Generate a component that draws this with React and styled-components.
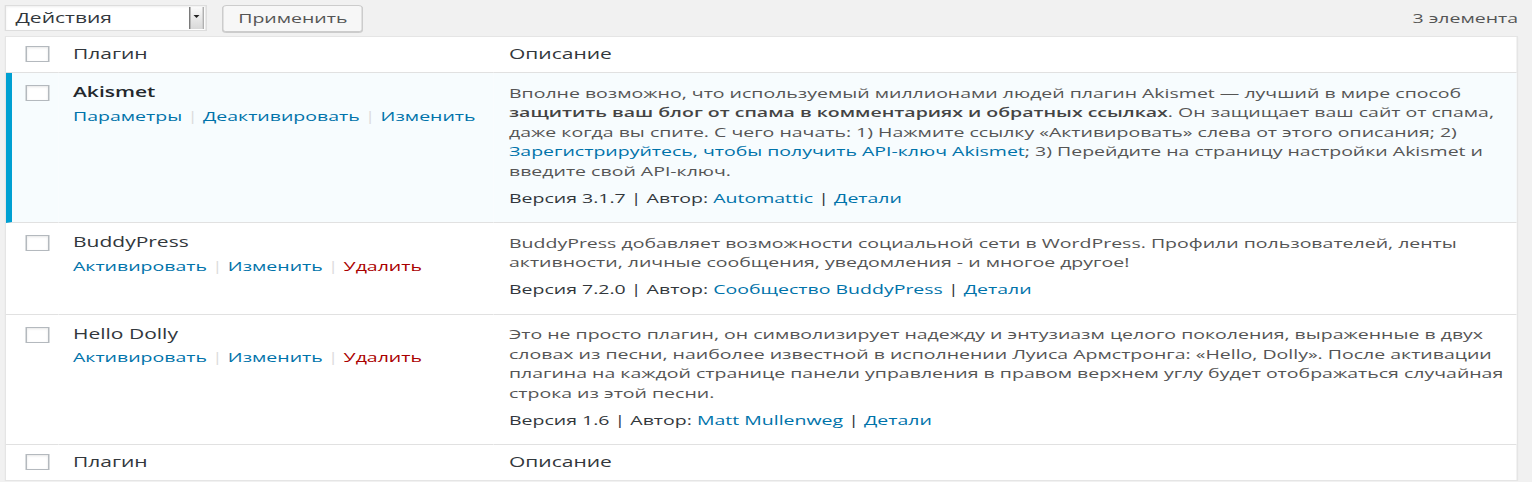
import React from "react";
import styled, { createGlobalStyle } from "styled-components";

// The reference is a WordPress plugin list captured at ~1021px and stretched
// 1.5x horizontally, so the page is laid out at its real width and stretched.
const STRETCH = 1.5;

const plugins = [
  {
    name: "Akismet",
    active: true,
    actions: [
      { label: "Параметры" },
      { label: "Деактивировать" },
      { label: "Изменить" },
    ],
    description: (
      <>
        Вполне возможно, что используемый миллионами людей плагин Akismet —
        лучший в мире способ{" "}
        <strong>защитить ваш блог от спама в комментариях и обратных ссылках</strong>.
        Он защищает ваш сайт от спама, даже когда вы спите. С чего начать: 1)
        Нажмите ссылку «Активировать» слева от этого описания; 2){" "}
        <a href="#">Зарегистрируйтесь, чтобы получить API-ключ Akismet</a>; 3)
        Перейдите на страницу настройки Akismet и введите свой API-ключ.
      </>
    ),
    version: "3.1.7",
    author: "Automattic",
  },
  {
    name: "BuddyPress",
    active: false,
    actions: [
      { label: "Активировать" },
      { label: "Изменить" },
      { label: "Удалить", danger: true },
    ],
    description: (
      <>
        BuddyPress добавляет возможности социальной сети в WordPress. Профили
        пользователей, ленты активности, личные сообщения, уведомления - и
        многое другое!
      </>
    ),
    version: "7.2.0",
    author: "Сообщество BuddyPress",
  },
  {
    name: "Hello Dolly",
    active: false,
    actions: [
      { label: "Активировать" },
      { label: "Изменить" },
      { label: "Удалить", danger: true },
    ],
    description: (
      <>
        Это не просто плагин, он символизирует надежду и энтузиазм целого
        поколения, выраженные в двух словах из песни, наиболее известной в
        исполнении Луиса Армстронга: «Hello, Dolly». После активации плагина на
        каждой странице панели управления в правом верхнем углу будет
        отображаться случайная строка из этой песни.
      </>
    ),
    version: "1.6",
    author: "Matt Mullenweg",
  },
];

const App = () => (
  <>
    <GlobalStyle />
    <Stretch>
      <TableNav>
        <Select>
          <SelectLabel>Действия</SelectLabel>
          <SelectArrow />
        </Select>
        <Button>Применить</Button>
        <Count>3 элемента</Count>
      </TableNav>

      <Table>
        <thead>
          <tr>
            <HeadCheck>
              <Checkbox />
            </HeadCheck>
            <HeadCell $width="290.67px">Плагин</HeadCell>
            <HeadCell>Описание</HeadCell>
          </tr>
        </thead>
        <tbody>
          {plugins.map((plugin) => (
            <tr key={plugin.name}>
              <RowCheck $active={plugin.active}>
                <Checkbox />
              </RowCheck>
              <TitleCell $active={plugin.active}>
                <Title $active={plugin.active}>{plugin.name}</Title>
                <RowActions>
                  {plugin.actions.map((action, i) => (
                    <React.Fragment key={action.label}>
                      {i > 0 && <Sep> | </Sep>}
                      <ActionLink href="#" $danger={action.danger}>
                        {action.label}
                      </ActionLink>
                    </React.Fragment>
                  ))}
                </RowActions>
              </TitleCell>
              <DescCell $active={plugin.active}>
                <Description>{plugin.description}</Description>
                <Meta>
                  Версия {plugin.version} | Автор:{" "}
                  <a href="#">{plugin.author}</a> | <a href="#">Детали</a>
                </Meta>
              </DescCell>
            </tr>
          ))}
        </tbody>
        <tfoot>
          <tr>
            <FootCheck>
              <Checkbox />
            </FootCheck>
            <FootCell>Плагин</FootCell>
            <FootCell>Описание</FootCell>
          </tr>
        </tfoot>
      </Table>
    </Stretch>
  </>
);

const GlobalStyle = createGlobalStyle`
  html, body {
    margin: 0;
    padding: 0;
    background: #f1f1f1;
    overflow: hidden;
  }

  body {
    font-family: "Open Sans", "Noto Sans", sans-serif;
    font-size: 13px;
    line-height: 1.5;
    color: #444;
  }

  a {
    color: #0073aa;
    text-decoration: none;
  }
`;

const Stretch = styled.div`
  box-sizing: border-box;
  width: ${1532 / STRETCH}px;
  padding: 0 9.33px 0 3.33px;
  transform: scaleX(${STRETCH});
  transform-origin: 0 0;
`;

const TableNav = styled.div`
  display: flex;
  align-items: flex-start;
  gap: 9.5px;
  height: 27px;
  padding-top: 5px;
  margin-bottom: 4px;
`;

const Select = styled.div`
  box-sizing: border-box;
  display: flex;
  align-items: stretch;
  width: 135px;
  height: 26px;
  background: #fff;
  border: 1px solid #ddd;
  box-shadow: inset 0 1px 2px rgba(0, 0, 0, 0.07);
`;

const SelectLabel = styled.span`
  flex: 1;
  padding-left: 6px;
  font-size: 14px;
  line-height: 24px;
  color: #32373c;
`;

const SelectArrow = styled.span`
  position: relative;
  width: 8px;
  margin: 1px 1px 1px 0;
  background: linear-gradient(#fafafa, #d8d8d8);
  border-left: 1px solid #7a7a7a;
  border-right: 1px solid #b0b0b0;

  &::after {
    content: "";
    position: absolute;
    left: 1.5px;
    top: 8px;
    border-left: 2.5px solid transparent;
    border-right: 2.5px solid transparent;
    border-top: 3px solid #222;
  }
`;

const Button = styled.button`
  box-sizing: border-box;
  width: 94px;
  height: 27px;
  padding: 0 10px;
  background: #f7f7f7;
  border: 1px solid #ccc;
  border-radius: 3px;
  box-shadow: 0 1px 0 #ccc;
  font-family: inherit;
  font-size: 13px;
  line-height: 25px;
  color: #555;
  cursor: pointer;
`;

const Count = styled.span`
  margin-left: auto;
  font-size: 13px;
  line-height: 26px;
  color: #555;
`;

const Table = styled.table`
  width: 100%;
  table-layout: fixed;
  border-collapse: separate;
  border-spacing: 0;
  background: #fff;
  border: 1px solid #e5e5e5;
  box-shadow: 0 1px 1px rgba(0, 0, 0, 0.04);

  th,
  td {
    box-sizing: border-box;
    vertical-align: top;
    text-align: left;
  }
`;

const Checkbox = styled.input.attrs({ type: "checkbox" })`
  appearance: none;
  display: block;
  box-sizing: border-box;
  width: 16px;
  height: 16px;
  margin: 0;
  background: #fff;
  border: 1px solid #b4b9be;
  border-radius: 0;
  box-shadow: inset 0 1px 2px rgba(0, 0, 0, 0.1);
`;

const HeadCheck = styled.td`
  width: 34.33px;
  height: 36px;
  padding: 9px 0 0 13px;
  border-bottom: 1px solid #e1e1e1;
`;

const HeadCell = styled.th`
  width: ${(p) => p.$width || "auto"};
  padding: 7px 10px 0;
  font-size: 14px;
  font-weight: 400;
  line-height: 19.6px;
  color: #32373c;
  border-bottom: 1px solid #e1e1e1;
`;

const FootCheck = styled.td`
  height: 35px;
  padding: 9px 0 0 13px;
`;

const FootCell = styled.th`
  padding: 7px 10px 0;
  font-size: 14px;
  font-weight: 400;
  line-height: 19.6px;
  color: #32373c;
`;

const BodyCell = styled.td`
  background: ${(p) => (p.$active ? "#f7fcfe" : "#fff")};
  border-bottom: 1px solid #e1e1e1;
`;

const RowCheck = styled(BodyCell)`
  padding: 12px 0 0 ${(p) => (p.$active ? "9px" : "13px")};
  border-left: ${(p) => (p.$active ? "4px solid #00a0d2" : "0")};
`;

const TitleCell = styled(BodyCell)`
  padding: 8px 10px;
`;

const Title = styled.strong`
  display: block;
  margin-bottom: 2.8px;
  font-size: 14px;
  font-weight: ${(p) => (p.$active ? 600 : 400)};
  line-height: 21px;
  color: ${(p) => (p.$active ? "#23282d" : "#32373c")};
`;

const RowActions = styled.div`
  padding-top: 2px;
  line-height: 19.5px;
`;

const Sep = styled.span`
  color: #ddd;
  white-space: pre;
`;

const ActionLink = styled.a`
  color: ${(p) => (p.$danger ? "#a00" : "#0073aa")};
`;

const DescCell = styled(BodyCell)`
  padding: 10.5px 3px 14px 10px;
`;

const Description = styled.p`
  margin: 0 0 7.5px;
  line-height: 19.5px;
  color: #555;

  strong {
    font-weight: 600;
    color: #444;
  }
`;

const Meta = styled.div`
  line-height: 19.5px;
  color: #32373c;
`;

export default App;
